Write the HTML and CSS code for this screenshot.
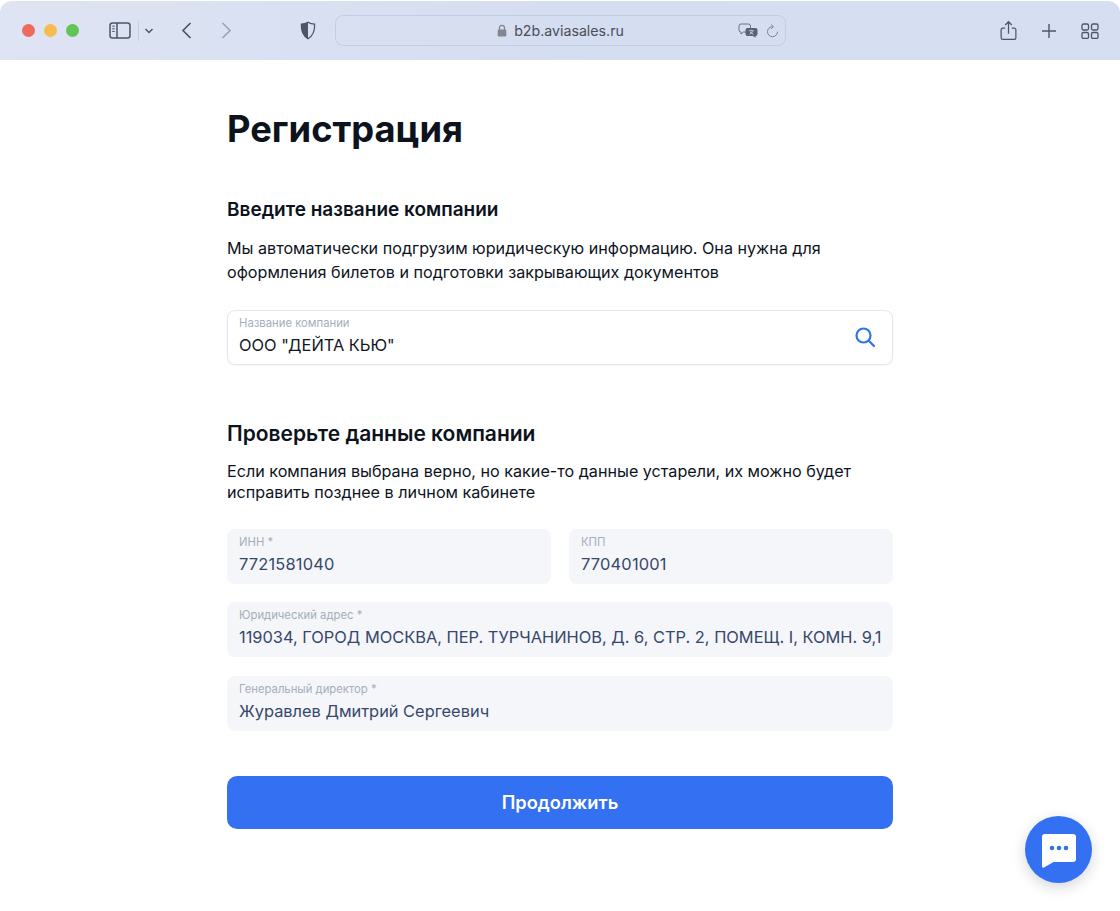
FILE: index.html
```html
<!DOCTYPE html>
<html lang="en">
<head>
    <meta charset="UTF-8">
    <meta name="viewport" content="width=device-width, initial-scale=1.0">
    <title>Регистрация</title>
    <link rel="stylesheet" href="styles.css">
</head>
<body>

    <header class="toolbar">
        <div class="traffic">
            <span class="dot dot-red"></span>
            <span class="dot dot-yellow"></span>
            <span class="dot dot-green"></span>
        </div>

        <svg class="icon sidebar-icon" width="22" height="17" viewBox="0 0 22 17" fill="none" stroke="#4c556b" stroke-width="1.5">
            <rect x="1" y="1" width="20" height="15" rx="2.5"/>
            <path d="M8 1v15"/>
            <path d="M3.2 4.2h2.6M3.2 6.8h2.6M3.2 9.4h2.6" stroke-width="1"/>
        </svg>
        <span class="divider"></span>
        <svg class="icon chevron-icon" width="10" height="6" viewBox="0 0 10 6" fill="none" stroke="#4c556b" stroke-width="1.5">
            <path d="M1.5 1l3.5 3.5L8.5 1"/>
        </svg>

        <svg class="icon back-icon" width="11" height="17" viewBox="0 0 11 17" fill="none" stroke="#4c556b" stroke-width="1.7">
            <path d="M9.5 1L2 8.5l7.5 7.5"/>
        </svg>
        <svg class="icon forward-icon" width="11" height="17" viewBox="0 0 11 17" fill="none" stroke="#9ba3b8" stroke-width="1.7">
            <path d="M1.5 1L9 8.5 1.5 16"/>
        </svg>

        <svg class="icon shield-icon" width="16" height="19" viewBox="0 0 16 19">
            <path d="M8 1.2c2 1.2 4.2 1.8 6.6 1.9.3 6.6-1.6 11.8-6.6 14.6C3 14.9 1.100 9.700 1.400 3.100 3.800 3 6 2.400 8 1.200z" fill="none" stroke="#4c556b" stroke-width="1.300"/>
            <path d="M8 1.200v16.500C3 14.900 1.100 9.700 1.400 3.100 3.800 3 6 2.400 8 1.200z" fill="#4c556b"/>
        </svg>

        <div class="address-bar">
            <svg class="lock-icon" width="10" height="13" viewBox="0 0 10 13">
                <path d="M2.500 6V3.800a2.500 2.500 0 0 1 5 0V6" fill="none" stroke="#85858d" stroke-width="1.300"/>
                <rect x="0.700" y="5.500" width="8.600" height="7" rx="1.300" fill="#85858d"/>
            </svg>
            <span class="address-text">b2b.aviasales.ru</span>
            <div class="address-actions">
                <svg width="21" height="15" viewBox="0 0 21 15">
                    <path d="M3 1h7.500a2 2 0 0 1 2 2v4a2 2 0 0 1-2 2H5.500L3 11V9a2 2 0 0 1-2-2V3a2 2 0 0 1 2-2z" fill="none" stroke="#6c7280" stroke-width="1"/>
                    <path d="M9.500 5h8a2 2 0 0 1 2 2v4a2 2 0 0 1-2 2v1.800L15 13H9.500a2 2 0 0 1-2-2V7a2 2 0 0 1 2-2z" fill="#5b6170"/>
                    <path d="M11 7.800h5M13.500 6.800v1M11.500 11.500l3.500-3M12 9l3.500 2.500" stroke="#d5ddf0" stroke-width="0.800" fill="none"/>
                </svg>
                <svg width="13" height="14" viewBox="0 0 13 14" fill="none" stroke="#7d8391" stroke-width="1">
                    <path d="M6.500 2.700a5 5 0 1 0 5 5"/>
                    <path d="M5.200 0.600l2.300 2.100-2.300 2.100"/>
                </svg>
            </div>
        </div>

        <div class="toolbar-right">
            <svg width="17" height="21" viewBox="0 0 18 21" fill="none" stroke="#4c556b" stroke-width="1.300">
                <path d="M5.500 8H3a1.800 1.800 0 0 0-1.800 1.800v8.400A1.800 1.800 0 0 0 3 20h12a1.800 1.800 0 0 0 1.800-1.800V9.800A1.800 1.800 0 0 0 15 8h-2.500"/>
                <path d="M9 14V1.500M5.500 4.700L9 1.200l3.500 3.500"/>
            </svg>
            <svg width="16" height="16" viewBox="0 0 16 16" fill="none" stroke="#4c556b" stroke-width="1.400">
                <path d="M8 1v14M1 8h14"/>
            </svg>
            <svg width="18" height="16" viewBox="0 0 18 16" fill="none" stroke="#4c556b" stroke-width="1.300">
                <rect x="1" y="1" width="6.500" height="6" rx="1.500"/>
                <rect x="10.500" y="1" width="6.500" height="6" rx="1.500"/>
                <rect x="1" y="9.500" width="6.500" height="6" rx="1.500"/>
                <rect x="10.500" y="9.500" width="6.500" height="6" rx="1.500"/>
            </svg>
        </div>
    </header>

    <main class="container">
        <h1>Регистрация</h1>

        <h2>Введите название компании</h2>
        <p class="hint hint-first">Мы автоматически подгрузим юридическую информацию. Она нужна для оформления билетов и подготовки закрывающих документов</p>

        <div class="field field-search">
            <div class="field-body">
                <div class="field-label">Название компании</div>
                <div class="field-value">ООО "ДЕЙТА КЬЮ"</div>
            </div>
            <svg class="search-icon" width="22" height="22" viewBox="0 0 22 22" fill="none" stroke="#3371f2" stroke-width="2.200">
                <circle cx="9.500" cy="9.500" r="7"/>
                <path d="M14.800 14.800L20 20" stroke-linecap="round"/>
            </svg>
        </div>

        <h2 class="heading-check">Проверьте данные компании</h2>
        <p class="hint hint-check">Если компания выбрана верно, но какие-то данные устарели, их можно будет исправить позднее в личном кабинете</p>

        <div class="fields">
            <div class="field-row">
                <div class="field field-filled">
                    <div class="field-label">ИНН *</div>
                    <div class="field-value field-number">7721581040</div>
                </div>
                <div class="field field-filled">
                    <div class="field-label">КПП</div>
                    <div class="field-value field-number">770401001</div>
                </div>
            </div>
            <div class="field field-filled">
                <div class="field-label">Юридический адрес *</div>
                <div class="field-value">119034, ГОРОД МОСКВА, ПЕР. ТУРЧАНИНОВ, Д. 6, СТР. 2, ПОМЕЩ. I, КОМН. 9,10</div>
            </div>
            <div class="field field-filled field-last">
                <div class="field-label">Генеральный директор *</div>
                <div class="field-value">Журавлев Дмитрий Сергеевич</div>
            </div>
        </div>

        <button type="button" class="submit-btn">Продолжить</button>
    </main>

    <button type="button" class="chat-btn" aria-label="Чат">
        <svg width="34" height="34" viewBox="0 0 34 34">
            <path d="M3 0h28a3 3 0 0 1 3 3v22a3 3 0 0 1-3 3H11.500L2 33.500A1.300 1.300 0 0 1 0 32.500V3a3 3 0 0 1 3-3z" fill="#fff"/>
            <circle cx="10" cy="14" r="2.300" fill="#3371f2"/>
            <circle cx="17" cy="14" r="2.300" fill="#3371f2"/>
            <circle cx="24" cy="14" r="2.300" fill="#3371f2"/>
        </svg>
    </button>

</body>
</html>
```

FILE: styles.css
```css
* {
    margin: 0;
    padding: 0;
    box-sizing: border-box;
}

body {
    font-family: Inter, 'Noto Sans', sans-serif;
    background: #ffffff;
    color: #0d131c;
    height: 911px;
    overflow: hidden;
}

/* Browser toolbar */
.toolbar {
    margin-top: 1px;
    height: 59px;
    background: linear-gradient(90deg, #dee4f3 0%, #d5ddf0 50%, #d6def1 100%);
    border-radius: 12px 12px 0 0;
    display: flex;
    align-items: center;
    padding: 0 21px 0 22px;
    position: relative;
}

.traffic {
    display: flex;
    gap: 9px;
}

.dot {
    width: 13px;
    height: 13px;
    border-radius: 50%;
}

.dot-red { background: #ee6a5f; }
.dot-yellow { background: #f5bd4f; }
.dot-green { background: #61c454; }

.icon {
    flex: none;
}

.sidebar-icon { margin-left: 30px; }

.divider {
    width: 1px;
    height: 20px;
    background: #c6cde0;
    margin-left: 7px;
}

.chevron-icon { margin-left: 5px; }
.back-icon { margin-left: 27px; }
.forward-icon { margin-left: 29px; }
.shield-icon { margin-left: 68px; }

.address-bar {
    width: 451px;
    height: 31px;
    margin-left: 19px;
    border: 1px solid #c4cde2;
    border-radius: 8px;
    display: flex;
    align-items: center;
    justify-content: center;
    position: relative;
    color: #4a4e58;
    font-size: 14.2px;
}

.lock-icon { margin-right: 7px; }

.address-actions {
    position: absolute;
    right: 6px;
    top: 7px;
    display: flex;
    align-items: center;
    gap: 7px;
}

.toolbar-right {
    margin-left: auto;
    display: flex;
    align-items: center;
    gap: 24px;
}

/* Form */
.container {
    width: 666px;
    margin: 0 auto;
}

h1 {
    font-size: 36.3px;
    line-height: 44px;
    font-weight: 700;
    margin-top: 47px;
}

h2 {
    font-size: 19px;
    line-height: 24px;
    font-weight: 600;
    margin-top: 47px;
}

.heading-check {
    font-size: 21px;
    margin-top: 57px;
}

.hint {
    font-size: 16.15px;
    line-height: 24px;
    margin-top: 14px;
}

.hint-check {
    margin-top: 15px;
    line-height: 21px;
}

.field {
    height: 55px;
    border-radius: 8px;
    padding: 6px 12px 0;
}

.field-search {
    margin-top: 26px;
    border: 1px solid #e3e6ef;
    padding: 5px 16px 0 11px;
    box-shadow: 0 1px 2px rgba(30, 45, 90, 0.05);
    display: flex;
    align-items: center;
}

.field-search .field-value {
    color: #12171f;
}

.field-body {
    flex: 1;
    align-self: flex-start;
    min-width: 0;
}

.search-icon {
    flex: none;
    margin-top: -7px;
}

.field-filled {
    background: #f4f6f9;
}

.field-label {
    font-size: 11.3px;
    line-height: 14px;
    color: #a6aebd;
}

.field-value {
    font-size: 16.4px;
    line-height: 24px;
    margin-top: 3px;
    color: #37476b;
    white-space: nowrap;
    overflow: hidden;
}

.field-number {
    letter-spacing: 0.2px;
}

.fields {
    display: flex;
    flex-direction: column;
    gap: 18px;
    margin-top: 26px;
}

.field-last {
    margin-top: 1px;
}

.field-row {
    display: grid;
    grid-template-columns: 324px 324px;
    justify-content: space-between;
}

.submit-btn {
    display: block;
    width: 100%;
    height: 53px;
    margin-top: 45px;
    padding-bottom: 2px;
    border: none;
    border-radius: 10px;
    background: #3371f2;
    color: #ffffff;
    font-family: inherit;
    font-size: 18.3px;
    font-weight: 600;
    cursor: pointer;
}

/* Chat widget */
.chat-btn {
    position: fixed;
    left: 1025px;
    top: 816px;
    width: 67px;
    height: 67px;
    border: none;
    border-radius: 50%;
    background: #3371f2;
    box-shadow: 0 4px 14px rgba(20, 30, 60, 0.18);
    display: flex;
    align-items: center;
    justify-content: center;
    cursor: pointer;
}

.chat-btn svg {
    margin-top: 3px;
}
```
